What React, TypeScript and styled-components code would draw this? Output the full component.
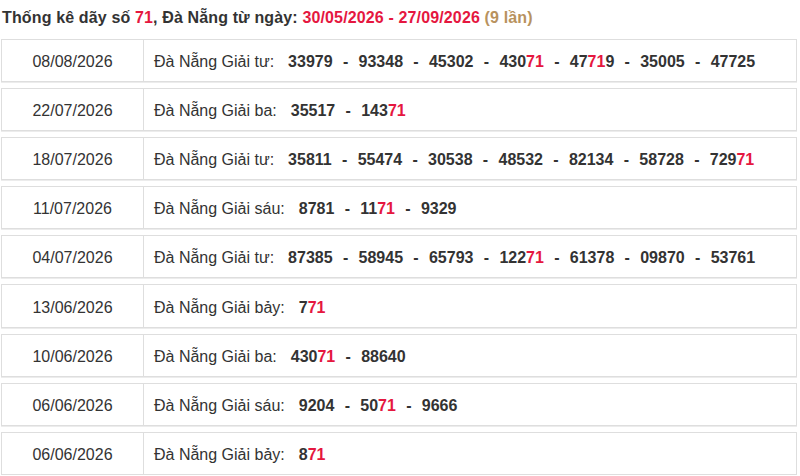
import React from "react";
import styled, { createGlobalStyle } from "styled-components";

const Global = createGlobalStyle`
  html, body { margin: 0; padding: 0; background: #fff; }
  body { font-family: "Liberation Sans", Arial, sans-serif; color: #333; }
`;

const Page = styled.div`
  width: 800px;
  padding: 0 3px 0 1px;
  box-sizing: border-box;
`;

const Title = styled.h3`
  margin: 0;
  padding: 8px 0 0 1px;
  height: 39px;
  box-sizing: border-box;
  font-size: 16px;
  font-weight: bold;
  line-height: 20px;
  letter-spacing: 0.14px;
  color: #333;
`;

const Red = styled.span`
  color: #e5173f;
`;

const Count = styled.span`
  color: #b8925e;
`;

const List = styled.div`
  display: flex;
  flex-direction: column;
  gap: 6px;
`;

const Row = styled.div`
  display: grid;
  grid-template-columns: 142px 1fr;
  height: 43.1px;
  box-sizing: border-box;
  border: 1px solid #dedede;
  box-shadow: 0 1px 0 #ececec;
`;

const DateCell = styled.div`
  display: flex;
  align-items: center;
  justify-content: center;
  padding-top: 3px;
  border-right: 1px solid #dedede;
  font-size: 16px;
  color: #333;
`;

const ResultCell = styled.div`
  display: flex;
  align-items: center;
  padding: 3px 0 0 10px;
  font-size: 16px;
  color: #333;
  white-space: pre;
`;

const Label = styled.span`
  margin-right: 14px;
`;

const Num = styled.b`
  font-weight: bold;
`;

const Sep = styled.b`
  font-weight: bold;
  margin: 0 10.3px;
`;

type Entry = { date: string; prize: string; nums: string[] };

const data: Entry[] = [
  { date: "08/08/2026", prize: "Giải tư", nums: ["33979", "93348", "45302", "43071", "47719", "35005", "47725"] },
  { date: "22/07/2026", prize: "Giải ba", nums: ["35517", "14371"] },
  { date: "18/07/2026", prize: "Giải tư", nums: ["35811", "55474", "30538", "48532", "82134", "58728", "72971"] },
  { date: "11/07/2026", prize: "Giải sáu", nums: ["8781", "1171", "9329"] },
  { date: "04/07/2026", prize: "Giải tư", nums: ["87385", "58945", "65793", "12271", "61378", "09870", "53761"] },
  { date: "13/06/2026", prize: "Giải bảy", nums: ["771"] },
  { date: "10/06/2026", prize: "Giải ba", nums: ["43071", "88640"] },
  { date: "06/06/2026", prize: "Giải sáu", nums: ["9204", "5071", "9666"] },
  { date: "06/06/2026", prize: "Giải bảy", nums: ["871"] },
];

const Highlight: React.FC<{ n: string }> = ({ n }) => {
  const i = n.indexOf("71");
  if (i < 0) return <Num>{n}</Num>;
  return (
    <Num>
      {n.slice(0, i)}
      <Red>71</Red>
      {n.slice(i + 2)}
    </Num>
  );
};

export default function App() {
  return (
    <>
      <Global />
      <Page>
        <Title>
          Thống kê dãy số <Red>71</Red>, Đà Nẵng từ ngày: <Red>30/05/2026 - 27/09/2026</Red>{" "}
          <Count>(9 lần)</Count>
        </Title>
        <List>
          {data.map((e, idx) => (
            <Row key={idx}>
              <DateCell>{e.date}</DateCell>
              <ResultCell>
                <Label>Đà Nẵng {e.prize}:</Label>
                {e.nums.map((n, j) => (
                  <React.Fragment key={j}>
                    {j > 0 && <Sep>-</Sep>}
                    <Highlight n={n} />
                  </React.Fragment>
                ))}
              </ResultCell>
            </Row>
          ))}
        </List>
      </Page>
    </>
  );
}
